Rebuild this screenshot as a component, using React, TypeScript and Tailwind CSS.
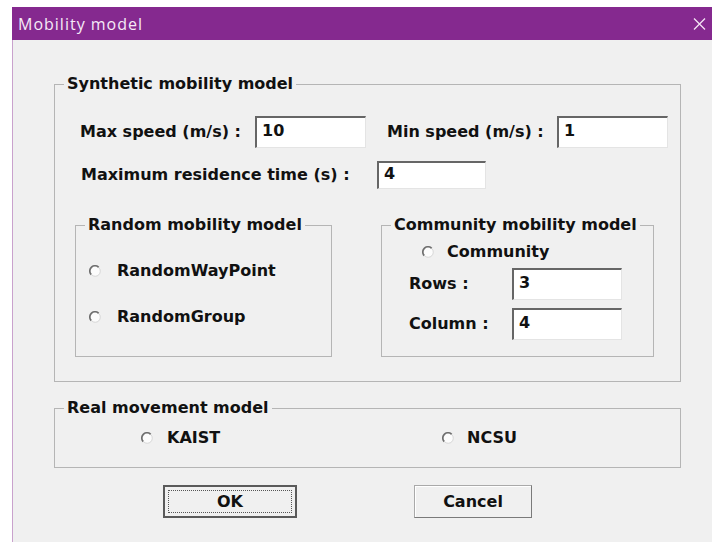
import React from "react";

function Radio() {
  return (
    <svg width="12" height="12" viewBox="0 0 12 12" className="shrink-0">
      <circle cx="6" cy="6" r="5" fill="#fcfcfc" />
      <path d="M2.3 9.7 A5 5 0 0 1 9.7 2.3" stroke="#6f6f6f" strokeWidth="1.7" fill="none" />
      <path d="M9.8 2.6 A5 5 0 0 1 2.6 9.8" stroke="#d8d8d8" strokeWidth="1" fill="none" />
    </svg>
  );
}

function Field({ value, className }: { value: string; className: string }) {
  return (
    <div
      className={`flex items-center bg-white border-t-2 border-l-2 border-r border-b border-t-[#666666] border-l-[#666666] border-r-[#e4e4e4] border-b-[#e4e4e4] pl-[5px] pb-[3px] ${className}`}
    >
      {value}
    </div>
  );
}

function Group({
  label,
  className,
  children,
}: {
  label: string;
  className: string;
  children: React.ReactNode;
}) {
  return (
    <fieldset className={`border border-[#b5b5b5] ${className}`}>
      <legend className="ml-[9px] px-[3px] leading-5">{label}</legend>
      {children}
    </fieldset>
  );
}

function Option({ label, gap }: { label: string; gap: string }) {
  return (
    <div className={`flex items-center h-5 ${gap}`}>
      <Radio />
      <span>{label}</span>
    </div>
  );
}

export default function App() {
  return (
    <div className="w-[712px] h-[542px] bg-white pt-[7px] pl-[12px] overflow-hidden">
      <div className="flex flex-col h-[535px]">
        <div className="h-[33px] shrink-0 bg-[#85298f] flex items-center justify-between pl-[6px] pr-[6px]">
          <span className="font-['Open_Sans',sans-serif] text-[16px] tracking-[1px] text-[#f6eaf7]">
            Mobility model
          </span>
          <svg width="13" height="12" viewBox="0 0 13 12">
            <path d="M1 0.5 L12 11.5 M12 0.5 L1 11.5" stroke="#f3e4f4" strokeWidth="1.3" fill="none" />
          </svg>
        </div>

        <div className="flex-1 bg-[#f0f0f0] border-l border-l-[#c9a2cd] font-['DejaVu_Sans',sans-serif] font-bold text-[16px] text-[#111111]">
          <Group label="Synthetic mobility model" className="mt-[34px] ml-[41px] w-[627px] pb-[24px]">
            <div className="mt-[22px] flex items-center h-[32px] pl-[25px]">
              <span className="w-[175px]">Max speed (m/s) :</span>
              <Field value="10" className="w-[111px] h-[32px]" />
              <span className="ml-[21px] w-[170px]">Min speed (m/s) :</span>
              <Field value="1" className="w-[111px] h-[32px]" />
            </div>
            <div className="mt-[13px] flex items-center h-[28px] pl-[26px]">
              <span className="w-[296px]">Maximum residence time (s) :</span>
              <Field value="4" className="w-[109px] h-[28px]" />
            </div>
            <div className="mt-[26px] flex items-start pl-[20px] gap-[49px]">
              <Group label="Random mobility model" className="w-[257px] pb-[29px]">
                <div className="mt-[26px] pl-[13px]">
                  <Option label="RandomWayPoint" gap="gap-[16px]" />
                </div>
                <div className="mt-[26px] pl-[13px]">
                  <Option label="RandomGroup" gap="gap-[16px]" />
                </div>
              </Group>
              <Group label="Community mobility model" className="w-[273px] pb-[16px]">
                <div className="mt-[7px] pl-[40px]">
                  <Option label="Community" gap="gap-[13px]" />
                </div>
                <div className="mt-[6px] flex items-center pl-[27px]">
                  <span className="w-[103px]">Rows :</span>
                  <Field value="3" className="w-[110px] h-[32px]" />
                </div>
                <div className="mt-[8px] flex items-center pl-[27px]">
                  <span className="w-[103px]">Column :</span>
                  <Field value="4" className="w-[110px] h-[32px]" />
                </div>
              </Group>
            </div>
          </Group>

          <Group label="Real movement model" className="mt-[16px] ml-[41px] w-[627px] pb-[19px]">
            <div className="mt-[10px] flex items-center pl-[86px]">
              <div className="w-[301px]">
                <Option label="KAIST" gap="gap-[14px]" />
              </div>
              <Option label="NCSU" gap="gap-[13px]" />
            </div>
          </Group>

          <div className="mt-[17px] flex pl-[150px]">
            <button className="w-[134px] h-[33px] border-2 border-[#5a5a5a] bg-[#f0f0f0] p-[3px]">
              <div className="w-full h-full border border-dotted border-[#555] flex items-center justify-center">
                OK
              </div>
            </button>
            <button className="ml-[117px] w-[118px] h-[33px] border border-[#a9a9a9] border-r-[#7a7a7a] border-b-[#7a7a7a] shadow-[inset_1px_1px_0_#ffffff] bg-[#f0f0f0] flex items-center justify-center">
              Cancel
            </button>
          </div>
        </div>
      </div>
    </div>
  );
}
